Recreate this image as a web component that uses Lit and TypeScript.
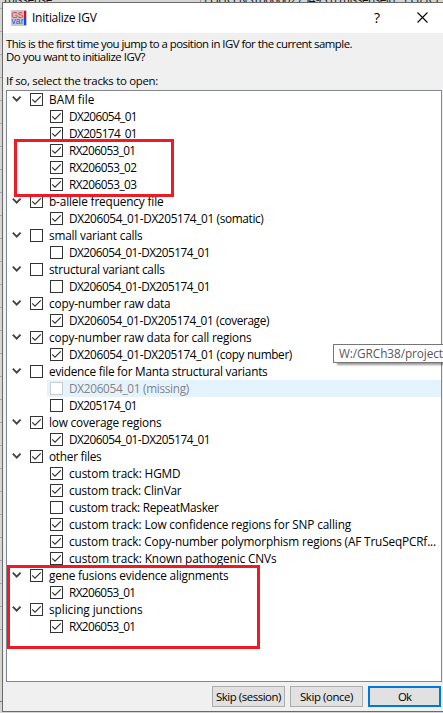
import { LitElement, html, css, svg, nothing } from "lit";
import { customElement, property } from "lit/decorators.js";

type Track = { label: string; width: number; checked: boolean; group?: boolean; missing?: boolean };

const g = (label: string, end: number, checked = true): Track => ({ label, width: end - 49, checked, group: true });
const t = (label: string, end: number, checked = true, missing = false): Track => ({ label, width: end - 69, checked, missing });

const TRACKS: Track[] = [
  g("BAM file", 94.5),
  t("DX206054_01", 137),
  t("DX205174_01", 137),
  t("RX206053_01", 135.5),
  t("RX206053_02", 136.5),
  t("RX206053_03", 136.5),
  g("b-allele frequency file", 163.5),
  t("DX206054_01-DX205174_01 (somatic)", 263.5),
  g("small variant calls", 142.5, false),
  t("DX206054_01-DX205174_01", 210, false),
  g("structural variant calls", 164.5, false),
  t("DX206054_01-DX205174_01", 210, false),
  g("copy-number raw data", 170.5),
  t("DX206054_01-DX205174_01 (coverage)", 269),
  g("copy-number raw data for call regions", 251.5),
  t("DX206054_01-DX205174_01 (copy number)", 292),
  g("evidence file for Manta structural variants", 267.5, false),
  t("DX206054_01 (missing)", 189, false, true),
  t("DX205174_01", 137, false),
  g("low coverage regions", 161.5),
  t("DX206054_01-DX205174_01", 210),
  g("other files", 101.5),
  t("custom track: HGMD", 180.5),
  t("custom track: ClinVar", 181.5),
  t("custom track: RepeatMasker", 218.5, false),
  t("custom track: Low confidence regions for SNP calling", 351),
  t("custom track: Copy-number polymorphism regions (AF TruSeqPCRf...", 436),
  t("custom track: Known pathogenic CNVs", 276.5),
  g("gene fusions evidence alignments", 228.5),
  t("RX206053_01", 135.5),
  g("splicing junctions", 142.5),
  t("RX206053_01", 135.5),
];

/** Single line of text whose letter spacing is adjusted to fill a given width. */
@customElement("fit-text")
class FitText extends LitElement {
  @property() text = "";
  @property({ type: Number }) width = 0;
  static styles = css`
    :host { display: inline-block; white-space: pre; }
    span { display: inline-block; }
  `;
  render() {
    return html`<span>${this.text}</span>`;
  }
  async updated() {
    await document.fonts.ready;
    const el = this.renderRoot.querySelector("span")!;
    el.style.letterSpacing = "0px";
    const natural = el.getBoundingClientRect().width;
    el.style.letterSpacing = `${(this.width - natural) / this.text.length}px`;
  }
}

@customElement("track-row")
class TrackRow extends LitElement {
  @property({ attribute: false }) track!: Track;
  static styles = css`
    :host { display: block; height: 17px; }
    .row { display: flex; height: 17px; padding-left: 3px; }
    .branch { width: 20px; flex: none; }
    .indent { width: 17px; flex: none; }
    .item { display: flex; flex: 1; min-width: 0; }
    .item.child { padding-left: 3px; }
    .item.missing { background: #e5f3ff; color: #838383; }
    .box { flex: none; width: 13px; height: 13px; margin-top: 2px; }
    .label { margin-left: 6px; line-height: 17px; white-space: pre; }
    svg { display: block; }
  `;
  render() {
    const { label, width, checked, group, missing } = this.track;
    return html`<div class="row">
      <div class="branch">
        ${group
          ? html`<svg width="20" height="17" viewBox="0 0 20 17"><path d="M2.8 5.7l3.9 3.9 3.9-3.9" fill="none" stroke="#444" stroke-width="1.9" /></svg>`
          : nothing}
      </div>
      ${group ? nothing : html`<div class="indent"></div>`}
      <div class="item ${group ? "" : "child"} ${missing ? "missing" : ""}">
        <svg class="box" viewBox="0 0 13 13">
          <rect x=".5" y=".5" width="12" height="12" fill="#fff" stroke=${missing ? "#cccccc" : "#333333"} />
          ${checked ? svg`<path d="M2.2 6.4l2.8 2.8 5.8-5.8" fill="none" stroke="#333" stroke-width="1.2" />` : nothing}
        </svg>
        <fit-text class="label" .text=${label} .width=${width}></fit-text>
      </div>
    </div>`;
  }
}

@customElement("app-root")
class AppRoot extends LitElement {
  static styles = css`
    :host {
      display: block; position: relative; width: 443px; height: 713px; overflow: hidden;
      background: #d5d5d5; color: #000;
      font: 11.8px "Open Sans", "Noto Sans", sans-serif;
    }
    .behind { position: absolute; left: 0; top: 0; width: 443px; height: 713px; }
    .behind-text { position: absolute; top: -9px; line-height: 16px; color: #111; white-space: pre; }
    .b1 { left: 4px; }
    .b2 { left: 204px; }
    .b3 { left: 404px; }
    .window {
      position: relative; box-sizing: border-box; margin-left: 2px; padding-top: 2px; height: 713px;
    }
    .frame {
      box-sizing: border-box; height: 710px; border: 1px solid #6b6b6b; border-right: 0;
      background: #f0f0f0; display: flex; flex-direction: column;
    }
    .title { display: flex; align-items: center; height: 30px; background: #fff; flex: none; }
    .logo { margin: 0 0 1px 8px; flex: none; }
    .title .name { margin-left: 5px; flex: 1; font-size: 12px; line-height: 30px; }
    .title svg { display: block; }
    .help { font-size: 14px; width: 10px; margin: 0 33px 2px 0; }
    .close { margin: 0 15px 2px 0; }
    .intro { padding: 4px 0 0 3px; height: 53px; line-height: 13px; flex: none; font-size: 11.4px; }
    .line { height: 13px; }
    .line.gap { margin-top: 11px; }
    .list {
      box-sizing: border-box; margin-left: 3px; width: 436px; height: 592px; flex: none;
      border: 1px solid #828790; background: #fff;
    }
    .buttons { display: flex; gap: 5px; padding: 4px 0 0 209px; font-size: 11.4px; }
    .btn {
      box-sizing: border-box; width: 73px; height: 21px; border: 1px solid #adadad; background: #e1e1e1;
      display: flex; align-items: center; justify-content: center; line-height: 17px;
    }
    .btn.ok { border: 2px solid #0078d7; }
    .mark { position: absolute; box-sizing: border-box; border: 3px solid #ed1c24; }
    .m1 { left: 14px; top: 139px; width: 160px; height: 58px; }
    .m2 { left: 7px; top: 565px; width: 253px; height: 84px; }
    .tip {
      position: absolute; left: 333px; top: 344px; width: 130px; height: 19px; box-sizing: border-box;
      border: 1px solid #767676; background: #fff; color: #575757; padding-left: 5px; line-height: 17px;
      box-shadow: 3px 3px 2px -1px rgba(0, 0, 0, .4);
    }
  `;
  render() {
    return html`
      <svg class="behind" viewBox="0 0 443 713">
        ${Array.from({ length: 28 }, (_, i) => svg`<path d="M0 ${8.5 + i * 23}H2" stroke="#aaa" />`)}
        <path d="M0 701.5H2" stroke="#777" />
        <path d="M200.5 0V3" stroke="#999" />
      </svg>
      <div class="behind-text b1"><fit-text text="missense" width="48"></fit-text></div>
      <div class="behind-text b2"><fit-text text="EGFR:ENST00000275493:n.missensein" width="191"></fit-text></div>
      <div class="behind-text b3">EGFR:ENS</div>
      <div class="window">
        <div class="frame">
          <div class="title">
            <svg class="logo" width="16" height="16" viewBox="0 0 16 16">
              <rect width="16" height="16" fill="#c8c8c8" />
              <rect x="13" y="1" width="2" height="7" fill="#f00" /><rect x="13" y="8" width="2" height="7" fill="#1444ff" />
              <text x=".5" y="7.5" font-family="Liberation Sans" font-size="8.5" textLength="12" fill="#f0283c">GS</text>
              <text x=".5" y="14.3" font-family="Liberation Sans" font-size="8.5" textLength="12" fill="#3058e8">var</text>
            </svg>
            <div class="name"><fit-text text="Initialize IGV" width="64.5"></fit-text></div>
            <div class="help">?</div>
            <svg class="close" width="11" height="11" viewBox="0 0 11 11"><path d="M.5 .5l10 10M10.5 .5l-10 10" stroke="#000" stroke-width="1.1" /></svg>
          </div>
          <div class="intro">
            <div class="line"><fit-text text="This is the first time you jump to a position in IGV for the current sample." width="346"></fit-text></div>
            <div class="line"><fit-text text="Do you want to initialize IGV?" width="139"></fit-text></div>
            <div class="line gap"><fit-text text="If so, select the tracks to open:" width="152"></fit-text></div>
          </div>
          <div class="list">${TRACKS.map((k) => html`<track-row .track=${k}></track-row>`)}</div>
          <div class="buttons">
            <div class="btn"><fit-text text="Skip (session)" width="65"></fit-text></div>
            <div class="btn"><fit-text text="Skip (once)" width="53"></fit-text></div>
            <div class="btn ok"><fit-text text="Ok" width="13"></fit-text></div>
          </div>
        </div>
      </div>
      <div class="mark m1"></div>
      <div class="mark m2"></div>
      <div class="tip"><fit-text text="W:/GRCh38/projects" width="109.5"></fit-text></div>
    `;
  }
}
